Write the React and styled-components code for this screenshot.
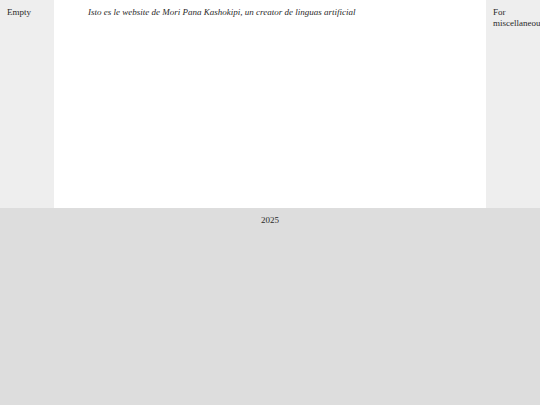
import styled, { createGlobalStyle } from 'styled-components';

const GlobalStyle = createGlobalStyle`
  html, body {
    margin: 0;
    padding: 0;
    background: #dddddd;
    overflow: hidden;
  }
  body {
    font-family: "Liberation Serif", "Times New Roman", serif;
    font-size: 9px;
    line-height: 10.5px;
    color: #2a2a2a;
  }
`;

const Page = styled.div`
  width: 540px;
  min-height: 405px;
  display: flex;
  flex-direction: column;
`;

const Layout = styled.div`
  display: grid;
  grid-template-columns: 54px 1fr 54px;
  height: 208px;
`;

const Sidebar = styled.aside`
  background: #eeeeee;
  padding: 7px 0 0 7px;
  overflow: hidden;
  white-space: nowrap;
`;

const Main = styled.main`
  background: #ffffff;
  padding: 7px 0 0 34px;
`;

const Intro = styled.p`
  margin: 0;
  font-style: italic;
`;

const Footer = styled.footer`
  flex: 1;
  background: #dddddd;
  text-align: center;
  padding-top: 7px;
`;

const App = () => (
  <Page>
    <GlobalStyle />
    <Layout>
      <Sidebar>Empty</Sidebar>
      <Main>
        <Intro>Isto es le website de Mori Pana Kashokipi, un creator de linguas artificial</Intro>
      </Main>
      <Sidebar>
        For
        <br />
        miscellaneous
      </Sidebar>
    </Layout>
    <Footer>2025</Footer>
  </Page>
);

export default App;
